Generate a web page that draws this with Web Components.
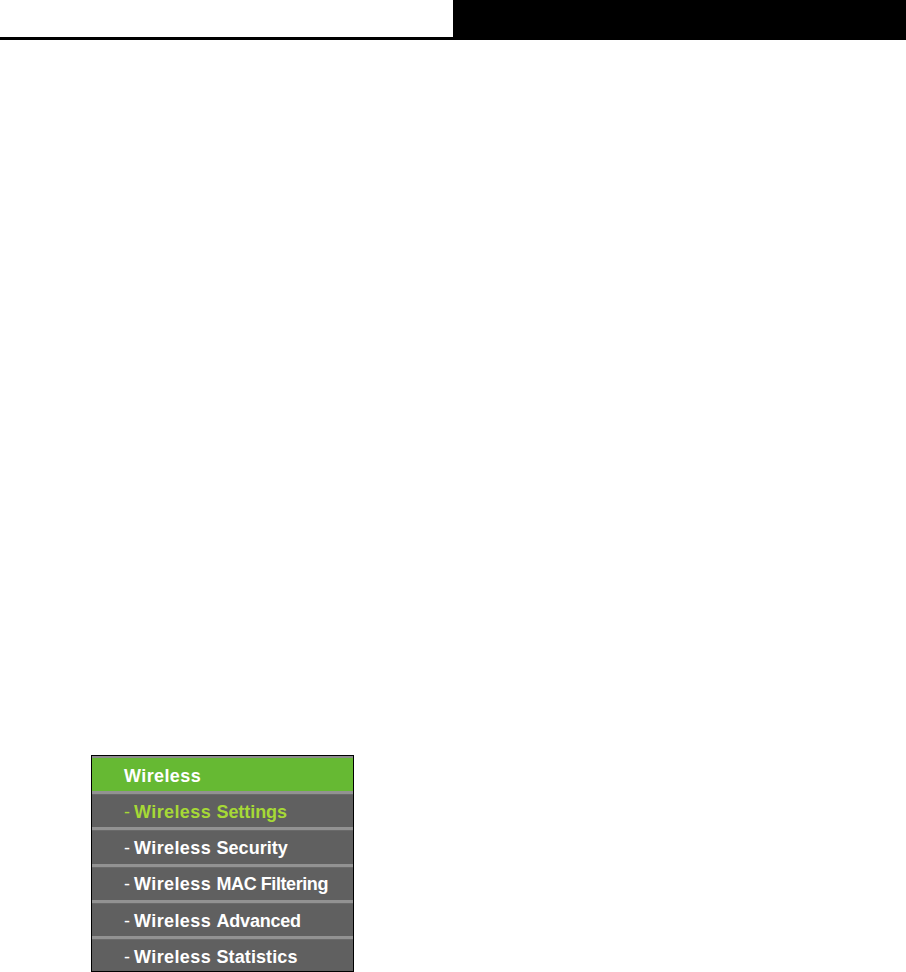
<!DOCTYPE html>
<html lang="en">
<head>
<meta charset="utf-8">
<title>Wireless</title>
<style>
  html, body {
    height: 100%;
    margin: 0;
    background: #fff;
  }

  body {
    display: flex;
    flex-direction: column;
    overflow: hidden;
  }

  side-menu {
    margin: auto 0 0 91px;
  }
</style>
</head>
<body>
<page-header></page-header>
<side-menu>
  <span slot="title">Wireless</span>
  <menu-entry active style="--track: -0.07px">Settings</menu-entry>
  <menu-entry style="--track: 0.05px">Security</menu-entry>
  <menu-entry style="--track: -0.42px; --pad: 7px">MAC Filtering</menu-entry>
  <menu-entry style="--track: -0.2px">Advanced</menu-entry>
  <menu-entry style="--track: 0.1px">Statistics</menu-entry>
</side-menu>

<script>
class PageHeader extends HTMLElement {
  constructor() {
    super();

    const shadow = this.attachShadow({mode: 'open'});
    shadow.innerHTML = `
        <style>
            :host {
                display: flex;
                justify-content: flex-end;
                flex: none;
                height: 37px;
                border-bottom: 3px solid #000;
            }
            div {
                width: 50%;
                background: #000;
            }
        </style>
        <div></div>
`;
  }
}

class SideMenu extends HTMLElement {
  constructor() {
    super();

    const template = document.createElement('template');
    template.innerHTML = `
        <style>
            :host {
                display: grid;
                grid-template-rows: 35px 36px 37px 36px 36px 1fr;
                flex: none;
                box-sizing: border-box;
                width: 263px;
                height: 217px;
                border: 1px solid #000;
                background: #606060;
                font: bold 18px/20px "Liberation Sans", Arial, sans-serif;
            }
            .title {
                box-sizing: border-box;
                padding: 8px 0 0 32px;
                border-top: 2px solid #8c8c8c;
                background: #66b933;
                color: #fff;
                letter-spacing: 0.4px;
            }
        </style>
        <div class="title"><slot name="title"></slot></div>
        <slot></slot>
`;

    const shadow = this.attachShadow({mode: 'open'});
    shadow.appendChild(document.importNode(template.content, true));
  }
}

/**
 * One row of the menu. The slot takes the part of the name after "Wireless".
 */
class MenuEntry extends HTMLElement {
  constructor() {
    super();

    const template = document.createElement('template');
    template.innerHTML = `
        <style>
            :host {
                display: flex;
                box-sizing: border-box;
                padding: var(--pad, 8px) 0 0 32px;
                border-top: 3px solid #929292;
                box-shadow: inset 0 1px #6a6a6a;
                color: #fff;
                white-space: nowrap;
            }
            :host([active]) {
                color: #a6d936;
            }
            .dash {
                flex: none;
                width: 10px;
                font-weight: normal;
            }
            .prefix {
                letter-spacing: 0.4px;
            }
            .label {
                letter-spacing: var(--track, 0);
            }
        </style>
        <span class="dash">-</span>
        <div><span class="prefix">Wireless </span><span class="label"><slot></slot></span></div>
`;

    const shadow = this.attachShadow({mode: 'open'});
    shadow.appendChild(document.importNode(template.content, true));
  }
}

customElements.define('page-header', PageHeader);
customElements.define('side-menu', SideMenu);
customElements.define('menu-entry', MenuEntry);
</script>
</body>
</html>
